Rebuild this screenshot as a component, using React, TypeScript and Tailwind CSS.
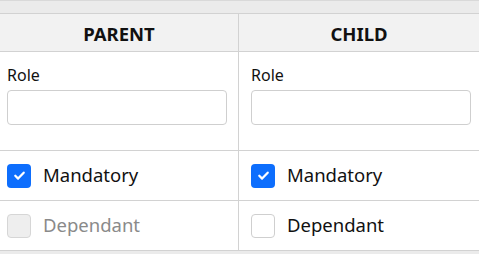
import React from "react";

type Side = {
  title: string;
  pad: string;
  dependantDisabled: boolean;
};

const sides: Side[] = [
  { title: "PARENT", pad: "pl-[7px]", dependantDisabled: true },
  { title: "CHILD", pad: "pl-[12px]", dependantDisabled: false },
];

function Check({ checked, disabled }: { checked: boolean; disabled?: boolean }) {
  if (checked) {
    return (
      <span className="flex h-6 w-6 shrink-0 items-center justify-center rounded-[4px] bg-[#0d6efd]">
        <svg width="15" height="15" viewBox="0 0 16 16" fill="none">
          <path
            d="M3.5 8.3l3 3 6-6.3"
            stroke="white"
            strokeWidth="2.4"
            strokeLinecap="round"
            strokeLinejoin="round"
          />
        </svg>
      </span>
    );
  }
  return (
    <span
      className={
        disabled
          ? "h-6 w-6 shrink-0 rounded-[4px] border border-[#d6d6d6] bg-[#eeeeee]"
          : "h-6 w-6 shrink-0 rounded-[4px] border border-[#cfcfcf] bg-white"
      }
    />
  );
}

export default function App() {
  const cellBorder = (i: number) => (i === 0 ? "border-r border-[#d2d2d2]" : "");

  return (
    <div
      className="h-[254px] w-[479px] overflow-hidden border-t border-[#d9d9d9] bg-[#ebebeb] pt-[12px] text-[#111]"
      style={{ fontFamily: '"Noto Sans", "Open Sans", sans-serif' }}
    >
      <div className="grid grid-cols-[239px_240px] border-t border-[#d2d2d2] bg-white">
        {/* header */}
        {sides.map((s, i) => (
          <div
            key={s.title}
            className={`flex h-[38px] items-center justify-center border-b border-[#d2d2d2] bg-[#f2f2f2] pt-[2px] text-[18.5px] font-bold ${cellBorder(i)}`}
          >
            {s.title}
          </div>
        ))}

        {/* role */}
        {sides.map((s, i) => (
          <div
            key={s.title + "-role"}
            className={`flex h-[99px] flex-col border-b border-[#d2d2d2] pt-[13px] ${s.pad} ${cellBorder(i)}`}
          >
            <label className="text-[16px] leading-[21px]">Role</label>
            <input
              className="mt-[4px] h-[35px] w-[220px] rounded-[4px] border border-[#cfcfcf] bg-white px-2 outline-none"
              type="text"
            />
          </div>
        ))}

        {/* mandatory */}
        {sides.map((s, i) => (
          <div
            key={s.title + "-mand"}
            className={`flex h-[50px] items-center gap-[12px] border-b border-[#d2d2d2] ${s.pad} ${cellBorder(i)}`}
          >
            <Check checked />
            <span className="-mt-[2px] text-[18.5px]">Mandatory</span>
          </div>
        ))}

        {/* dependant */}
        {sides.map((s, i) => (
          <div
            key={s.title + "-dep"}
            className={`flex h-[50px] items-center gap-[12px] border-b border-[#d2d2d2] ${s.pad} ${cellBorder(i)}`}
          >
            <Check checked={false} disabled={s.dependantDisabled} />
            <span
              className={
                s.dependantDisabled
                  ? "-mt-[2px] text-[18.5px] text-[#8a8a8a]"
                  : "-mt-[2px] text-[18.5px]"
              }
            >
              Dependant
            </span>
          </div>
        ))}
      </div>
    </div>
  );
}
